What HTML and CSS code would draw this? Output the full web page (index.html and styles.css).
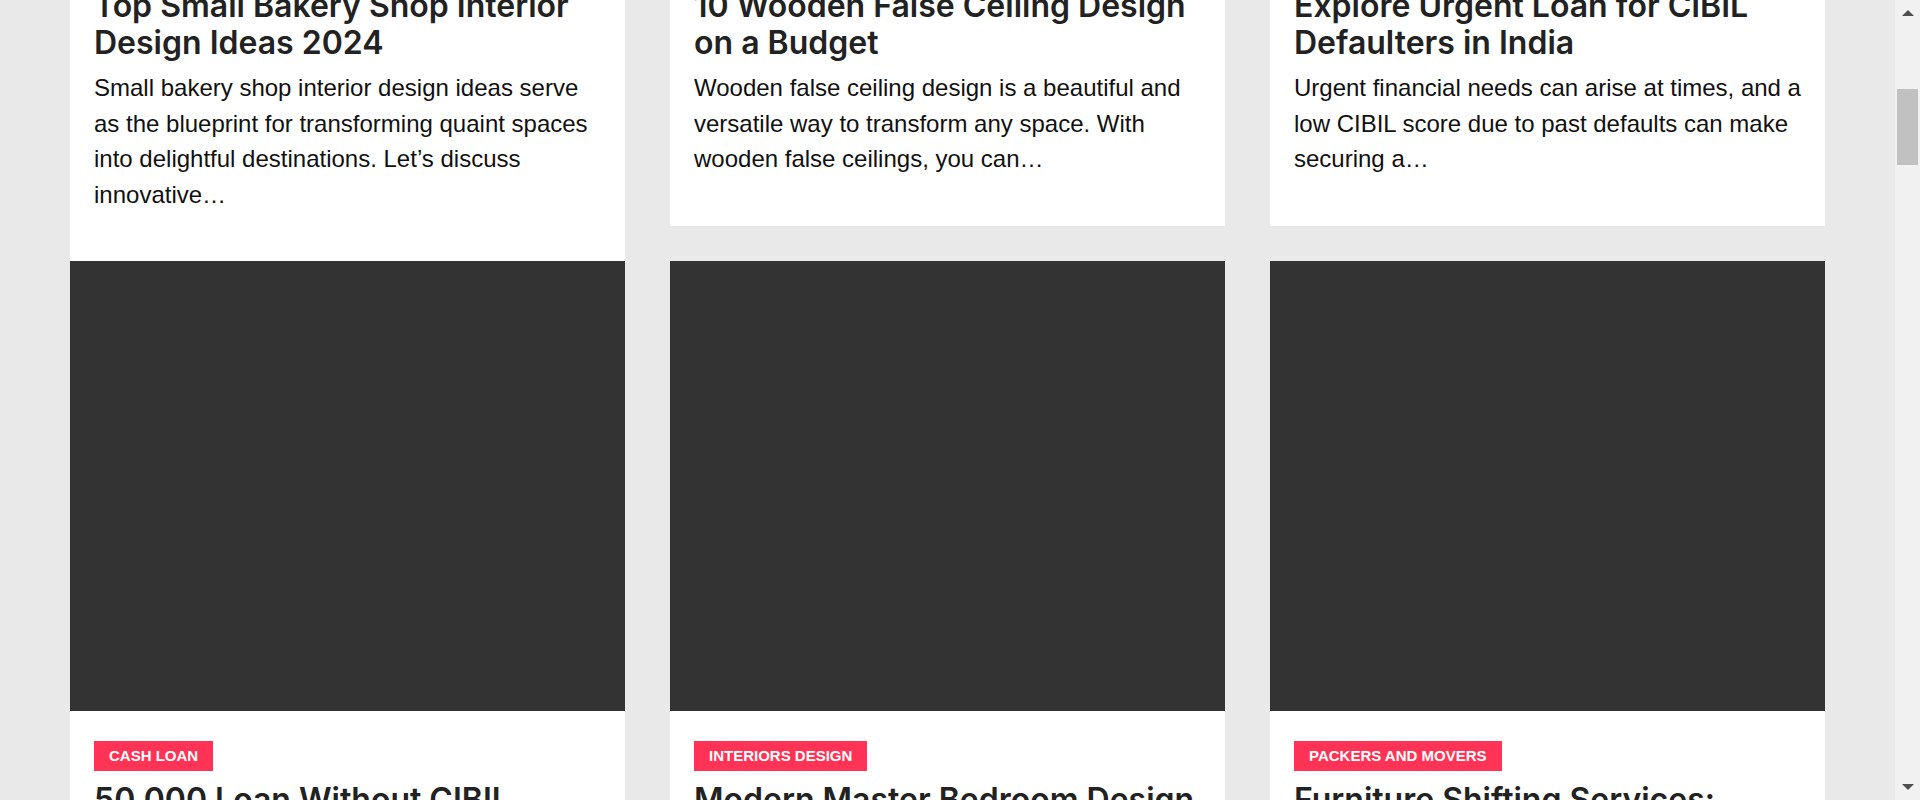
FILE: index.html
```html
<!DOCTYPE html>
<html lang="en">
<head>
<meta charset="utf-8">
<title>Posts</title>
<link rel="stylesheet" href="styles.css">
</head>
<body>
<div class="window">
  <main class="main">
    <div class="grid">
      <article class="card">
        <div class="thumb"></div>
        <div class="body">
          <span class="badge">Interiors Design</span>
          <h2 class="title">Top Small Bakery Shop Interior Design Ideas 2024</h2>
          <p class="excerpt">Small bakery shop interior design ideas serve as the blueprint for transforming quaint spaces into delightful destinations. Let’s discuss innovative…</p>
        </div>
      </article>
      <article class="card">
        <div class="thumb"></div>
        <div class="body">
          <span class="badge">Interiors Design</span>
          <h2 class="title">10 Wooden False Ceiling Design on a Budget</h2>
          <p class="excerpt">Wooden false ceiling design is a beautiful and versatile way to transform any space. With wooden false ceilings, you can…</p>
        </div>
      </article>
      <article class="card">
        <div class="thumb"></div>
        <div class="body">
          <span class="badge">Cash Loan</span>
          <h2 class="title">Explore Urgent Loan for CIBIL Defaulters in India</h2>
          <p class="excerpt">Urgent financial needs can arise at times, and a low CIBIL score due to past defaults can make securing a…</p>
        </div>
      </article>
      <article class="card">
        <div class="thumb"></div>
        <div class="body">
          <span class="badge">Cash Loan</span>
          <h2 class="title">50,000 Loan Without CIBIL Score: Quick Approval</h2>
          <p class="excerpt">Getting a loan without a good CIBIL score can be tough, but there are options available for you…</p>
        </div>
      </article>
      <article class="card">
        <div class="thumb"></div>
        <div class="body">
          <span class="badge">Interiors Design</span>
          <h2 class="title">Modern Master Bedroom Design Ideas for Your Home</h2>
          <p class="excerpt">A master bedroom is a personal retreat where you relax and unwind after a long day…</p>
        </div>
      </article>
      <article class="card">
        <div class="thumb"></div>
        <div class="body">
          <span class="badge">Packers and Movers</span>
          <h2 class="title">Furniture Shifting Services: Everything You Need to Know</h2>
          <p class="excerpt">Moving furniture from one place to another can be a stressful task without the right help…</p>
        </div>
      </article>
    </div>
  </main>
  <div class="scrollbar">
    <div class="arrow up"></div>
    <div class="track"><div class="thumb-bar"></div></div>
    <div class="arrow down"></div>
  </div>
</div>
</body>
</html>
```
FILE: styles.css
```css
* { box-sizing: border-box; }
html, body { margin: 0; padding: 0; height: 100%; overflow: hidden; }
body { font-family: "Liberation Sans", Arial, sans-serif; }

.window {
  display: flex;
  width: 1920px;
  height: 800px;
}

.main {
  flex: 1;
  background: #e9e9e9;
  overflow: hidden;
  height: 800px;
}

.grid {
  display: grid;
  grid-template-columns: repeat(3, 555px);
  column-gap: 45px;
  row-gap: 0;
  align-items: start;
  padding: 0 70px;
  margin-top: -533px;
}

.card {
  background: #fff;
}

.thumb {
  height: 450px;
  background: #333333;
}

.body {
  padding: 30px 24px 49px;
}

.badge {
  display: inline-block;
  background: #ff3355;
  color: #fff;
  font-family: "Liberation Sans", Arial, sans-serif;
  font-weight: 700;
  font-size: 15px;
  line-height: 30px;
  height: 30px;
  padding: 0 15px;
  text-transform: uppercase;
}

.title {
  margin: 11px 0 9px;
  font-family: Inter, "Noto Sans", sans-serif;
  font-weight: 600;
  font-size: 32px;
  line-height: 36.5px;
  color: #222;
  letter-spacing: 0;
}

.excerpt {
  margin: 0;
  font-family: "Liberation Sans", Arial, sans-serif;
  font-size: 24px;
  line-height: 35.5px;
  color: #111;
}

.scrollbar {
  width: 25px;
  background: #f1f1f1;
  display: flex;
  flex-direction: column;
  align-items: center;
}

.arrow {
  width: 0;
  height: 0;
  border-left: 6px solid transparent;
  border-right: 6px solid transparent;
}
.arrow.up {
  margin-top: 10px;
  border-bottom: 6px solid #505050;
}
.arrow.down {
  margin-bottom: 10px;
  border-top: 6px solid #505050;
}

.track {
  flex: 1;
  width: 100%;
  padding: 73px 2px 0 2px;
}

.thumb-bar {
  height: 76px;
  background: #c1c1c1;
}
```
